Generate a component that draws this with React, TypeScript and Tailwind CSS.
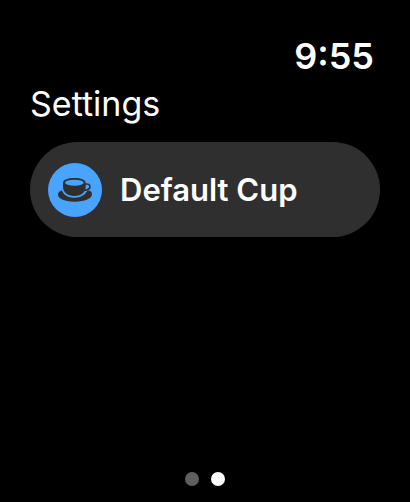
import React from 'react';

interface SettingsRowProps {
    label: string;
    icon: React.ReactNode;
}

const CupIcon: React.FC = () => (
    <svg viewBox="0 0 162 162" className="size-full" fill="#2f2f2f" aria-hidden="true">
        {/* Saucer */}
        <path d="M46 81C35 83 30 88 30 95C30 107 52 116 81 116C110 116 132 107 132 94C132 87 128 83 119 82L110 94H54Z" />
        {/* Bowl, with a blue gap where it sits on the saucer */}
        <path
            d="M45 60C45 50 59 45 79 45C99 45 113 50 113 60V70C113 88 101 99 79 99C57 99 45 88 45 70Z"
            stroke="#48a4ff"
            strokeWidth="10"
            paintOrder="stroke"
        />
        {/* Handle */}
        <path d="M111 64C120 61 126 65 126 71C126 78 119 82 108 81" fill="none" stroke="#2f2f2f" strokeWidth="5" />
        <ellipse cx="79" cy="59" rx="28" ry="9" fill="#48a4ff" />
    </svg>
);

const SettingsRow: React.FC<SettingsRowProps> = ({ label, icon }) => (
    <button
        type="button"
        className="flex w-full items-center gap-[18px] rounded-full bg-[#2f2f2f] px-[18px] pt-[21px] pb-5 text-left"
    >
        <span className="size-[54px] shrink-0 rounded-full bg-[#48a4ff]">{icon}</span>
        <span className="text-[31px] leading-10 font-semibold">{label}</span>
    </button>
);

const pages = ['Home', 'Settings'];

export default function App() {
    const activePage = 'Settings';

    return (
        <div className="flex min-h-screen flex-col bg-black px-[30px] pt-9 pb-4 font-['Inter','Liberation_Sans',sans-serif] text-white">
            <header>
                <time className="block pr-1.5 text-right text-[36px] leading-10 font-semibold">9:55</time>
                <h1 className="mt-2 text-[34px] leading-10 font-normal">Settings</h1>
            </header>

            <main className="mt-[18px] flex-1">
                <SettingsRow label="Default Cup" icon={<CupIcon />} />
            </main>

            {/* Page dots */}
            <nav className="flex justify-center gap-3">
                {pages.map((page) => (
                    <button
                        key={page}
                        type="button"
                        aria-label={page}
                        className={`size-3.5 rounded-full ${page === activePage ? 'bg-white' : 'bg-[#5f5f5f]'}`}
                    />
                ))}
            </nav>
        </div>
    );
}
